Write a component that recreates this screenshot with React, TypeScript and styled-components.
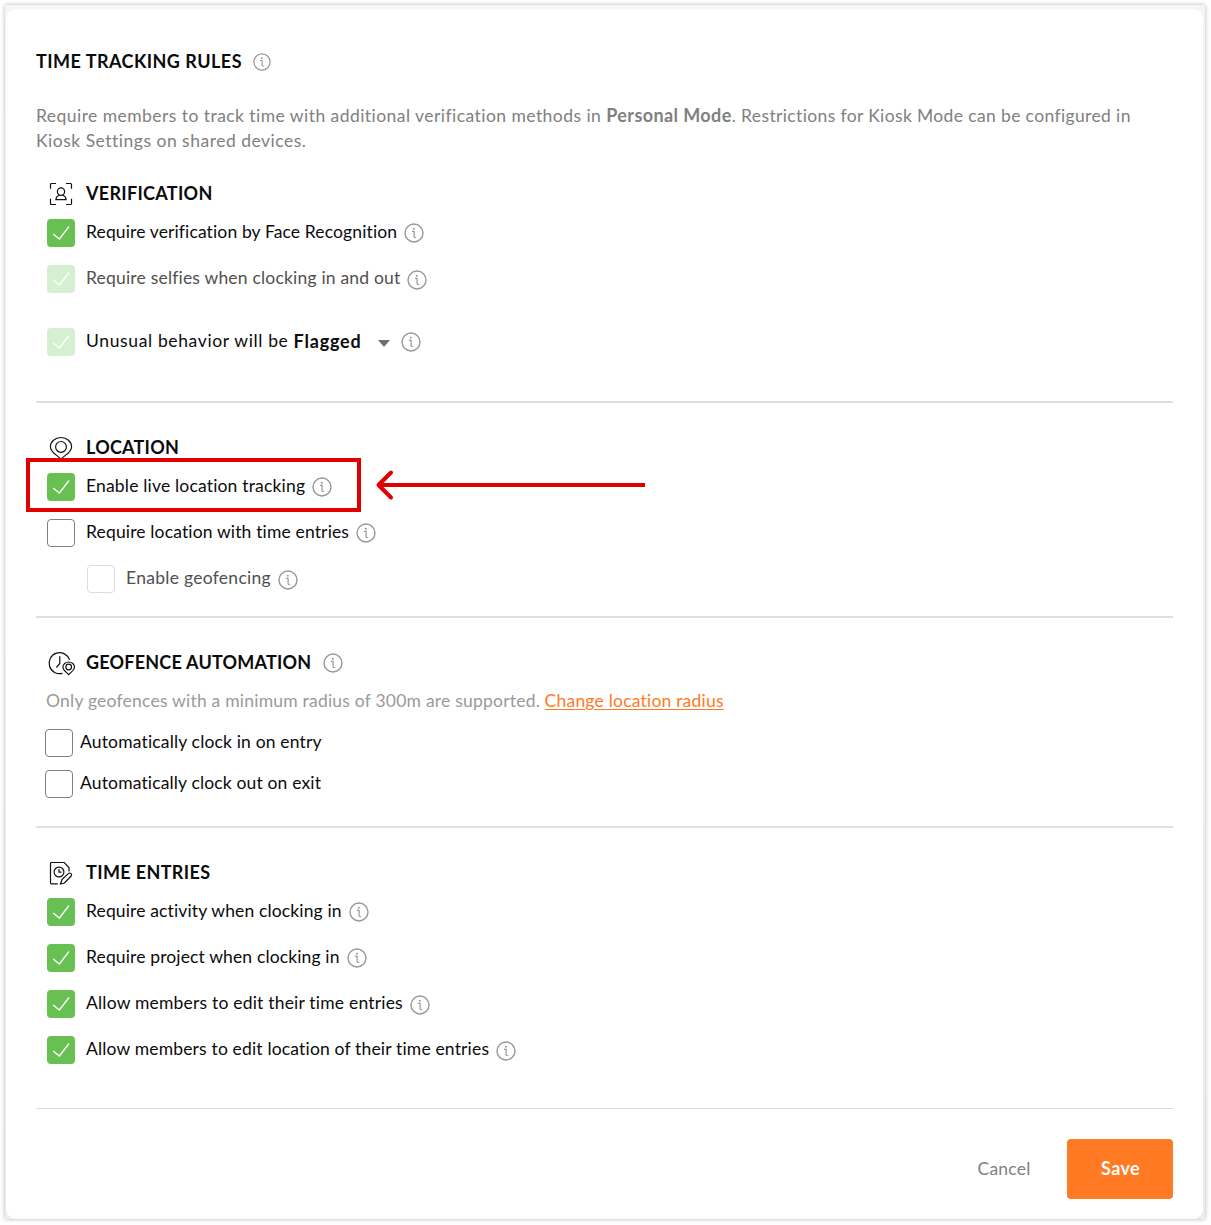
import React from "react";
import styled, { createGlobalStyle } from "styled-components";

const GlobalStyle = createGlobalStyle`
  * { box-sizing: border-box; }
  body {
    margin: 0;
    background: #fefefe;
    font-family: Lato, "Noto Sans", sans-serif;
    font-size: 17.5px;
    color: #0b0b0c;
  }
`;

const Page = styled.main`
  position: relative;
  width: 1211px;
  height: 1225px;
  padding: 5px 6px 6px 5px;
  overflow: hidden;
`;

const Frame = styled.div`
  height: 1214px;
  padding: 4px 2px 0 1px;
  background: linear-gradient(#f4f5f9, #ebecf0);
  box-shadow: 0 0 4px rgba(0, 0, 0, 0.3);
`;

const Card = styled.section`
  display: flex;
  flex-direction: column;
  height: 1210px;
  padding: 40px 30px 20px;
  border-radius: 10px;
  background: #fff;
`;

const Text = styled.span<{ $track: number }>`
  letter-spacing: ${(p) => p.$track}px;
  white-space: nowrap;
`;

const Strong = styled(Text)`
  font-size: 18px;
  font-weight: 700;
`;

const Title = styled.h1`
  display: flex;
  align-items: center;
  gap: 11.5px;
  height: 24px;
  margin: 0 0 30px;
  font-size: 18px;
  line-height: 24px;

  > svg {
    margin-top: 1px;
  }
`;

const Description = styled.p`
  margin: 0 0 1px;
  line-height: 25px;
  color: #808080;
`;

const Group = styled.section<{ $end: number; $last?: boolean }>`
  padding: 31px 0 ${(p) => p.$end}px;
  border-bottom: ${(p) => (p.$last ? "1px solid #dcdcdc" : "2px solid #dfdfdf")};

  &:first-of-type {
    padding-top: 26px;
  }
`;

const GroupHeading = styled.h2`
  display: flex;
  align-items: center;
  height: 26px;
  margin: 0;
  padding-left: 11px;
  font-size: 18px;
  line-height: 26px;

  > svg:first-child {
    flex: none;
    width: 28px;
    height: 28px;
    margin: 2px 11px 0 0;
  }
`;

const HeadingInfo = styled.span`
  display: flex;
  margin: 2px 0 0 12px;
`;

const Options = styled.div<{ $top?: number; $gap?: number; $left?: number }>`
  display: flex;
  flex-direction: column;
  gap: ${(p) => p.$gap ?? 18}px;
  margin-top: ${(p) => p.$top ?? 13}px;
  padding-left: ${(p) => p.$left ?? 11}px;
`;

const Option = styled.label<{ $indent?: boolean; $spaced?: boolean; $tight?: boolean; $muted?: boolean }>`
  display: flex;
  align-items: center;
  gap: ${(p) => (p.$tight ? 7.5 : 11)}px;
  height: 28px;
  margin-top: ${(p) => (p.$spaced ? 17 : 0)}px;
  margin-left: ${(p) => (p.$indent ? 40 : 0)}px;
  color: ${(p) => (p.$muted ? "#505050" : "inherit")};
`;

const OptionText = styled.span`
  display: flex;
  height: 28px;
  line-height: 26px;
`;

const InfoSlot = styled.span<{ $drop?: number; $gap?: number }>`
  display: flex;
  margin: ${(p) => 4.3 + (p.$drop ?? 0)}px 0 0 ${(p) => p.$gap ?? 7}px;
`;

const Box = styled.span<{ $state: "on" | "off"; $disabled?: boolean }>`
  display: flex;
  align-items: center;
  justify-content: center;
  flex: none;
  width: 28px;
  height: 28px;
  border-radius: 4px;
  border: ${(p) => (p.$state === "on" ? "0" : p.$disabled ? "1px solid #dcdcdc" : "1px solid #7d8087")};
  background: ${(p) => (p.$state === "off" ? "#fff" : p.$disabled ? "#d6eed1" : "#69c052")};
`;

const Note = styled.p`
  height: 24px;
  margin: 14px 0 0 10px;
  line-height: 24px;
  color: #9a9a9a;
`;

const NoteLink = styled.a<{ $track: number }>`
  margin-left: 4.5px;
  letter-spacing: ${(p) => p.$track}px;
  color: #ff7a24;
  text-decoration: underline;
  text-underline-offset: 2px;
`;

const Caret = styled.span`
  width: 0;
  height: 0;
  margin: 12px 4px 0 16px;
  border: 6.5px solid transparent;
  border-top: 7px solid #6e6e70;
  border-bottom: 0;
`;

const Actions = styled.footer`
  display: flex;
  justify-content: flex-end;
  align-items: center;
  gap: 36.5px;
  margin-top: 30px;
`;

const Cancel = styled.button`
  padding: 0 0 2px;
  border: 0;
  background: none;
  font: inherit;
  letter-spacing: 0.2px;
  color: #808080;
`;

const Save = styled.button`
  width: 106px;
  height: 60px;
  padding: 0 0 2px 1px;
  border: 0;
  border-radius: 4px;
  background: #ff7a22;
  font: inherit;
  font-size: 18px;
  font-weight: 700;
  letter-spacing: 0.37px;
  color: #fff;
`;

const Highlight = styled.div`
  position: absolute;
  left: 26px;
  top: 458px;
  width: 335px;
  height: 54px;
  border: 4px solid #e00000;
`;

const Arrow = styled.svg`
  position: absolute;
  left: 374px;
  top: 468px;
`;

const Info = ({ size = 20 }: { size?: number }) => (
  <svg width={size} height={size} viewBox="0 0 20 20" fill="none" stroke="#989898" strokeWidth="1.4">
    <circle cx="10" cy="10" r="9" />
    <path d="M7.9 8.3h2.2v5.2q0 1 1 1h1" strokeWidth="1.2" />
    <circle cx="9.8" cy="5.7" r="1" fill="#989898" stroke="none" />
  </svg>
);

const FaceIcon = () => (
  <svg viewBox="0 0 28 28" fill="none" stroke="#111" strokeWidth="1.2">
    <path d="M3.5 8.8V4.6Q3.5 3.5 4.6 3.5H9M19 3.5h4.4Q24.5 3.5 24.5 4.6V8.8M24.5 18.8v4.6q0 1.1-1.1 1.1H19M9 24.5H4.6Q3.5 24.5 3.5 23.4v-4.6" />
    <ellipse cx="14" cy="11.6" rx="3.6" ry="3.8" />
    <path d="M11.7 14.4v1.1q-2.6 1-2.8 4.1h10.2q-.2-3.1-2.8-4.1v-1.1" />
  </svg>
);

const PinIcon = () => (
  <svg viewBox="0 0 28 28" fill="none" stroke="#111" strokeWidth="1.2">
    <path d="M14 25.2C11 21.5 3.4 18.6 3.4 12.9a10.6 9.4 0 0 1 21.2 0C24.6 18.6 17 21.5 14 25.2Z" />
    <circle cx="14" cy="12.9" r="5.4" />
  </svg>
);

const ClockPinIcon = () => (
  <svg viewBox="0 0 28 28" fill="none" stroke="#111" strokeWidth="1.2">
    <path d="M15.5 24.3A10.5 10.5 0 1 1 22.6 10.9" />
    <path d="M12.8 7.3v7.2l-3.4 4" />
    <path d="M21.7 25.7c-1.6-2.1-5.8-4.3-5.8-7.5a5.8 5.2 0 0 1 11.6 0c0 3.2-4.2 5.4-5.8 7.5Z" />
    <circle cx="21.7" cy="18" r="2.8" />
  </svg>
);

const EntryIcon = () => (
  <svg viewBox="0 0 28 28" fill="none" stroke="#111" strokeWidth="1.2">
    <path d="M10.8 24.8H4.6Q3.5 24.8 3.5 23.7V4.6Q3.5 3.5 4.6 3.5h12.6l4.8 5v4" />
    <circle cx="12" cy="13" r="4.9" />
    <path d="M12 10v3.2h2.6" />
    <path d="m15 20.5 6.6-6.1q1.3-.9 2.5.2 1 1.2.1 2.4l-6.8 7-3.9 1Z" />
  </svg>
);

const Check = () => (
  <svg width="28" height="28" viewBox="0 0 28 28" fill="none" stroke="#fff" strokeWidth="1.25">
    <path d="m6.1 15 6.3 5L22 7.5" />
  </svg>
);

type RowProps = {
  label: string;
  track: number;
  on?: boolean;
  disabled?: boolean;
  indent?: boolean;
  tight?: boolean;
  info?: boolean;
  drop?: number;
};

const Row = ({ label, track, on, disabled, indent, tight, info = true, drop }: RowProps) => (
  <Option $indent={indent} $tight={tight} $muted={disabled}>
    <Box $state={on ? "on" : "off"} $disabled={disabled}>{on && <Check />}</Box>
    <OptionText>
      <Text $track={track}>{label}</Text>
      {info && <InfoSlot $drop={drop}><Info /></InfoSlot>}
    </OptionText>
  </Option>
);

export default function App() {
  return (
    <>
      <GlobalStyle />
      <Page>
        <Frame>
          <Card>
            <Title>
              <Text $track={0.467}>TIME TRACKING RULES</Text>
              <Info size={18} />
            </Title>
            <Description>
              <Text $track={0.45}>Require members to track time with additional verification methods in </Text>
              <Strong $track={0.4}>Personal Mode</Strong>
              <Text $track={0.364}>. Restrictions for Kiosk Mode can be configured in</Text>
              <br />
              <Text $track={0.5}>Kiosk Settings on shared devices.</Text>
            </Description>

            <Group $end={45}>
              <GroupHeading><FaceIcon /><Text $track={0.3}>VERIFICATION</Text></GroupHeading>
              <Options>
                <Row on label="Require verification by Face Recognition" track={0.127} />
                <Row on disabled label="Require selfies when clocking in and out" track={0.195} drop={1} />
                <Option $spaced>
                  <Box $state="on" $disabled><Check /></Box>
                  <OptionText>
                    <Text $track={0.64}>Unusual behavior will be&nbsp;</Text>
                    <Strong $track={0.81}>Flagged</Strong>
                    <Caret />
                    <InfoSlot><Info /></InfoSlot>
                  </OptionText>
                </Option>
              </Options>
            </Group>

            <Group $end={23}>
              <GroupHeading><PinIcon /><Text $track={0.24}>LOCATION</Text></GroupHeading>
              <Options>
                <Row on label="Enable live location tracking" track={0.18} />
                <Row label="Require location with time entries" track={0.15} />
                <Row disabled indent label="Enable geofencing" track={0.28} drop={1} />
              </Options>
            </Group>

            <Group $end={28}>
              <GroupHeading>
                <ClockPinIcon />
                <Text $track={0.21}>GEOFENCE AUTOMATION</Text>
                <HeadingInfo><Info /></HeadingInfo>
              </GroupHeading>
              <Note>
                <Text $track={0.22}>Only geofences with a minimum radius of 300m are supported.</Text>
                <NoteLink $track={0.21}>Change location radius</NoteLink>
              </Note>
              <Options $top={16} $gap={13} $left={8.5}>
                <Row tight info={false} label="Automatically clock in on entry" track={0.16} />
                <Row tight info={false} label="Automatically clock out on exit" track={0.15} />
              </Options>
            </Group>

            <Group $end={44} $last>
              <GroupHeading><EntryIcon /><Text $track={0.37}>TIME ENTRIES</Text></GroupHeading>
              <Options>
                <Row on label="Require activity when clocking in" track={0.14} />
                <Row on label="Require project when clocking in" track={0.135} />
                <Row on label="Allow members to edit their time entries" track={0.2} drop={1} />
                <Row on label="Allow members to edit location of their time entries" track={0.165} drop={1} />
              </Options>
            </Group>

            <Actions>
              <Cancel>Cancel</Cancel>
              <Save>Save</Save>
            </Actions>
          </Card>
        </Frame>
        <Highlight />
        <Arrow width="272" height="34" viewBox="0 0 272 34" fill="none" stroke="#e00000" strokeWidth="4">
          <path d="M5 17H271" />
          <path d="M17 4.5 4.5 17 17 29.5" strokeLinecap="round" strokeLinejoin="round" />
        </Arrow>
      </Page>
    </>
  );
}
